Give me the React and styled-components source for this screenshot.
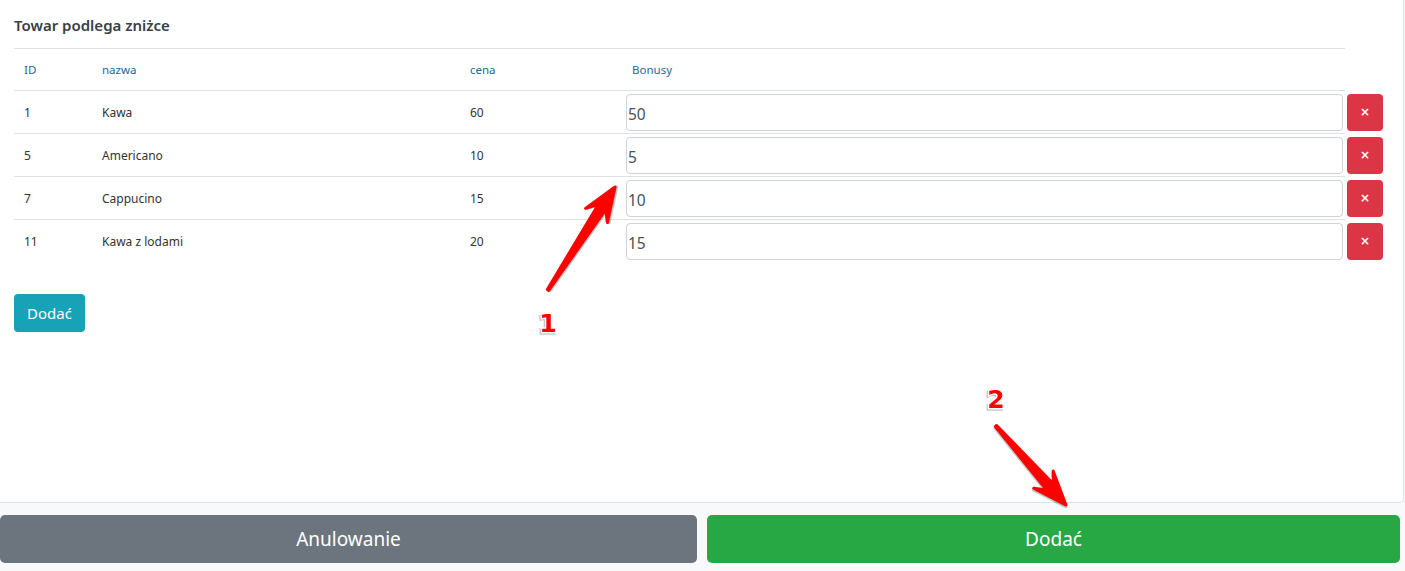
import React from "react";
import styled, { createGlobalStyle } from "styled-components";

const Global = createGlobalStyle`
  html, body { margin: 0; padding: 0; background: #f8f9fa; }
  body { font-family: "Noto Sans", "Open Sans", sans-serif; }
  * { box-sizing: border-box; }
`;

const Page = styled.div`
  position: relative;
  width: 1405px;
  height: 571px;
  overflow: hidden;
`;

const Card = styled.div`
  width: 1404px;
  height: 503px;
  background: #fff;
  border-right: 1px solid #dee2e6;
  border-bottom: 1px solid #dee2e6;
  border-bottom-right-radius: 5px;
  padding: 0 0 0 14px;
`;

const Title = styled.div`
  height: 48px;
  display: flex;
  align-items: center;
  font-size: 15px;
  font-weight: 600;
  color: #3a3f44;
  padding-top: 1px;
`;

const Table = styled.div`
  width: 1331px;
`;

const Row = styled.div`
  display: grid;
  grid-template-columns: 78px 368px 162px 1fr;
  height: ${(p) => (p.$head ? 42 : 43)}px;
  border-top: 1px solid #dee2e6;
  align-items: center;
`;

const Cell = styled.div`
  padding-left: ${(p) => (p.$tight ? 4 : 10)}px;
  font-size: ${(p) => (p.$head ? 11.5 : 12)}px;
  color: ${(p) => (p.$head ? "#21699b" : "#333")};
  display: flex;
  align-items: center;
  gap: 4px;
  white-space: nowrap;
`;

const Input = styled.input`
  width: 717px;
  height: 37px;
  flex: none;
  border: 1px solid #ced4da;
  border-radius: 4px;
  padding: 3px 1px 0;
  font-family: "Noto Sans", "Open Sans", sans-serif;
  font-size: 15.5px;
  color: #495057;
  background: #fff;
  outline: none;
`;

const DelButton = styled.button`
  flex: none;
  width: 36px;
  height: 37px;
  border: none;
  border-radius: 4px;
  background: #dc3545;
  color: #fff;
  font-size: 12px;
  font-weight: 700;
  padding: 0;
  font-family: "DejaVu Sans", sans-serif;
  display: flex;
  align-items: center;
  justify-content: center;
`;

const AddButton = styled.button`
  margin-top: 32px;
  width: 71px;
  height: 38px;
  border: none;
  border-radius: 4px;
  background: #17a2b8;
  color: #fff;
  font-family: "Noto Sans", "Open Sans", sans-serif;
  font-size: 15px;
  padding: 0;
`;

const Footer = styled.div`
  display: flex;
  gap: 10px;
  width: 1400px;
  margin-top: 12px;
`;

const BigButton = styled.button`
  height: 48px;
  flex: ${(p) => p.$w}px 0 0;
  border: none;
  border-radius: 5px;
  background: ${(p) => p.$bg};
  color: #fff;
  font-family: "Noto Sans", "Open Sans", sans-serif;
  font-size: 19px;
  padding: 0;
`;

const Overlay = styled.svg`
  position: absolute;
  left: 0;
  top: 0;
  pointer-events: none;
`;

const rows = [
  { id: 1, name: "Kawa", price: 60, bonus: "50" },
  { id: 5, name: "Americano", price: 10, bonus: "5" },
  { id: 7, name: "Cappucino", price: 15, bonus: "10" },
  { id: 11, name: "Kawa z lodami", price: 20, bonus: "15" },
];

function Arrow({ x1, y1, x2, y2 }) {
  const dx = x2 - x1;
  const dy = y2 - y1;
  const L = Math.sqrt(dx * dx + dy * dy);
  const ang = (Math.atan2(dy, dx) * 180) / Math.PI;
  const pts = [
    [0, -0.8],
    [L - 24, -4.5],
    [L - 34, -13],
    [L, 0],
    [L - 34, 13],
    [L - 24, 4.5],
    [0, 0.8],
  ]
    .map((p) => p.join(","))
    .join(" ");
  return (
    <g transform={`translate(${x1} ${y1}) rotate(${ang})`}>
      <polygon
        points={pts}
        fill="rgba(0,0,0,0.22)"
        stroke="rgba(0,0,0,0.22)"
        strokeWidth="3"
        strokeLinejoin="round"
        transform="translate(1 1.5)"
      />
      <polygon points={pts} fill="#f00" stroke="#f00" strokeWidth="3" strokeLinejoin="round" />
    </g>
  );
}

const Num = ({ x, y, children }) => (
  <text
    x={x}
    y={y}
    fill="#f00"
    stroke="#fff"
    strokeWidth="3"
    paintOrder="stroke"
    fontFamily="'DejaVu Sans', sans-serif"
    fontWeight="700"
    fontSize="25"
    textAnchor="middle"
    style={{ filter: "drop-shadow(-0.5px 1px 0.5px rgba(0,0,0,0.3))" }}
  >
    {children}
  </text>
);

export default function App() {
  return (
    <Page>
      <Global />
      <Card>
        <Title>Towar podlega zniżce</Title>
        <Table>
          <Row $head>
            <Cell $head>ID</Cell>
            <Cell $head>nazwa</Cell>
            <Cell $head>cena</Cell>
            <Cell $head>Bonusy</Cell>
          </Row>
          {rows.map((r) => (
            <Row key={r.id}>
              <Cell>{r.id}</Cell>
              <Cell>{r.name}</Cell>
              <Cell>{r.price}</Cell>
              <Cell $tight>
                <Input defaultValue={r.bonus} />
                <DelButton>×</DelButton>
              </Cell>
            </Row>
          ))}
        </Table>
        <AddButton>Dodać</AddButton>
      </Card>
      <Footer>
        <BigButton $w={697} $bg="#6c757d">Anulowanie</BigButton>
        <BigButton $w={693} $bg="#28a745">Dodać</BigButton>
      </Footer>
      <Overlay width="1405" height="571" viewBox="0 0 1405 571">
        <Arrow x1={548} y1={290} x2={615} y2={187} />
        <Arrow x1={996} y1={426} x2={1066} y2={505} />
        <Num x={548} y={332}>1</Num>
        <Num x={996} y={408}>2</Num>
      </Overlay>
    </Page>
  );
}
